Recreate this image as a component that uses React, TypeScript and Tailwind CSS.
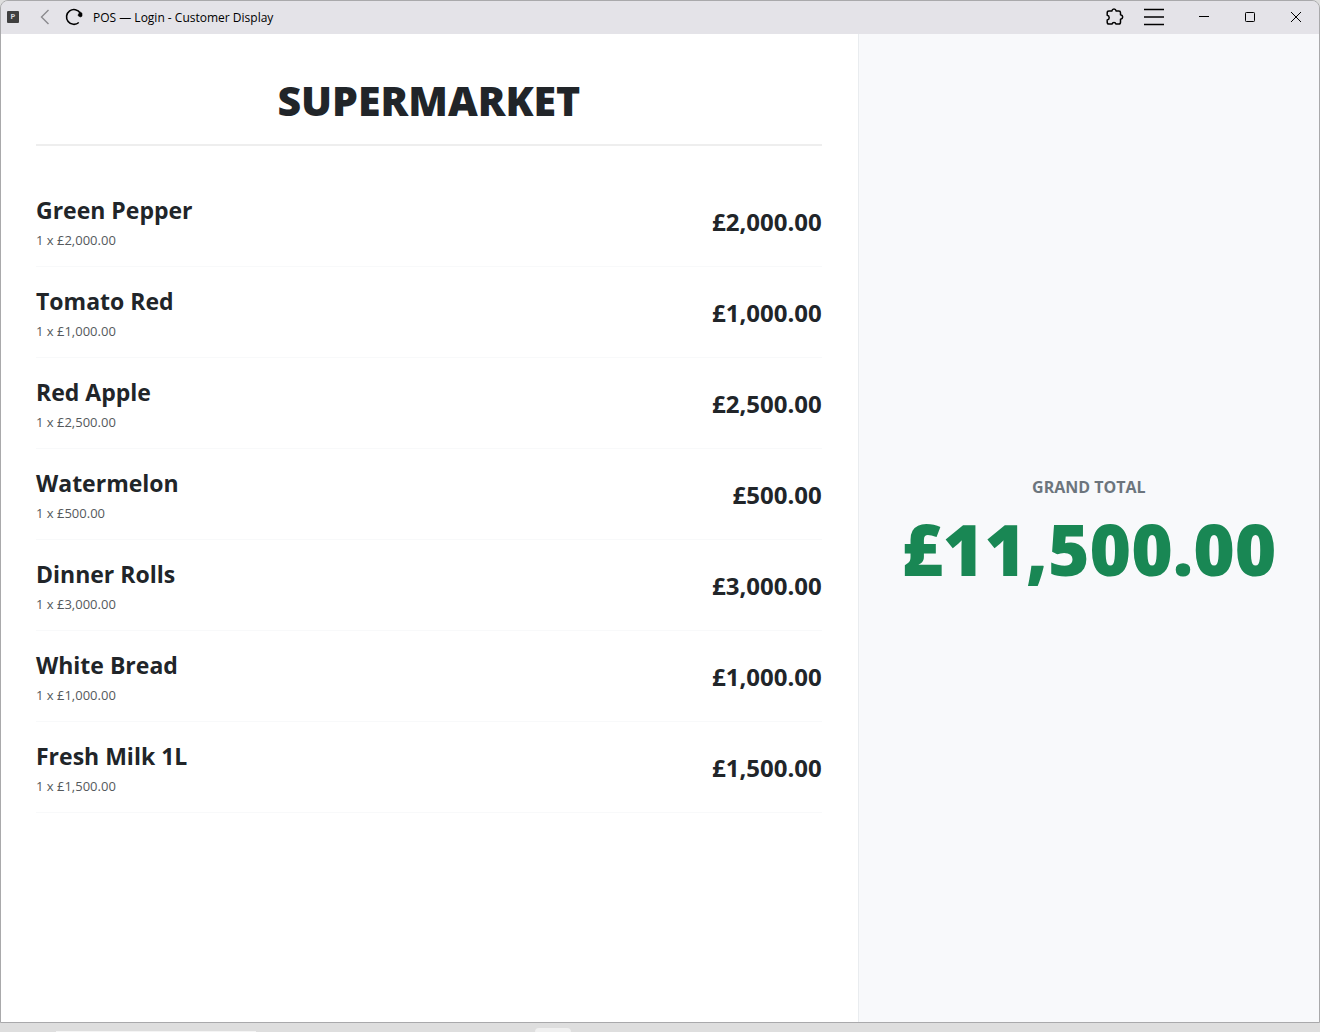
import React from 'react';

interface CartLine {
  name: string;
  qty: number;
  price: number;
}

const cart: CartLine[] = [
  { name: 'Green Pepper', qty: 1, price: 2000 },
  { name: 'Tomato Red', qty: 1, price: 1000 },
  { name: 'Red Apple', qty: 1, price: 2500 },
  { name: 'Watermelon', qty: 1, price: 500 },
  { name: 'Dinner Rolls', qty: 1, price: 3000 },
  { name: 'White Bread', qty: 1, price: 1000 },
  { name: 'Fresh Milk 1L', qty: 1, price: 1500 },
];

const formatMoney = (value: number) =>
  `£${value.toLocaleString('en-GB', { minimumFractionDigits: 2, maximumFractionDigits: 2 })}`;

function TitleBar() {
  return (
    <header className="flex h-[33px] shrink-0 items-center bg-[#e4e3e8] pb-px text-black">
      <div className="ml-1.5 flex size-3 items-center justify-center rounded-[1px] bg-[#404040] font-mono text-[8px] font-bold leading-none text-gray-300">
        P
      </div>
      <button type="button" aria-label="Back" className="ml-5 text-[#8b8a8e]">
        <svg width="12" height="18" viewBox="0 0 12 18" fill="none" stroke="currentColor" strokeWidth="1.4">
          <path d="M9.500 2 2.500 9l7 7" />
        </svg>
      </button>
      <button type="button" aria-label="Reload" className="ml-3.5">
        <svg width="18" height="18" viewBox="0 0 18 18" fill="none" stroke="currentColor" strokeWidth="1.6">
          <path d="M13.800 14.500A7.400 7.400 0 1 1 15.200 5" />
          <path d="M15.400 4.200 17 5.200v3l-1.800.8-2.200-1.400.6-1.800z" fill="currentColor" strokeWidth="0.600" strokeLinejoin="round" />
        </svg>
      </button>
      <span className="ml-2.5 pt-px text-xs">POS — Login - Customer Display</span>

      <div className="ml-auto flex items-center">
        <button type="button" aria-label="Extensions" className="mr-5">
          <svg width="18" height="18" viewBox="0 0 18 18" fill="none" stroke="currentColor" strokeWidth="1.5" strokeLinejoin="round">
            <path d="M3 3h2.800C6.100 1.700 6.900 1 8 1s1.900.7 2.200 2h2.600q1.700 0 1.700 1.700v2.100c1.300.3 2.200 1.100 2.200 2.200s-.9 1.900-2.200 2.200v3q0 1.800-1.700 1.800H10c-.3-1-1-1.500-2-1.500s-1.700.5-2 1.500H3q-1.800 0-1.800-1.800v-2.300c1.300-.3 2-1.100 2-2.200S2.500 7.500 1.200 7.200V4.700Q1.200 3 3 3z" />
          </svg>
        </button>
        <button type="button" aria-label="Menu" className="mr-[17px]">
          <svg width="20" height="18" viewBox="0 0 20 18" stroke="currentColor" strokeWidth="1.7">
            <path d="M0 1.500h20M0 9h20M0 16.500h20" />
          </svg>
        </button>
        <button type="button" aria-label="Minimize" className="flex w-[46px] justify-center">
          <svg width="10" height="10" viewBox="0 0 10 10" stroke="currentColor">
            <path d="M0 4.500h10" />
          </svg>
        </button>
        <button type="button" aria-label="Maximize" className="flex w-[46px] justify-center">
          <svg width="10" height="10" viewBox="0 0 10 10" fill="none" stroke="currentColor">
            <rect x="0.500" y="0.500" width="9" height="9" rx="0.800" />
          </svg>
        </button>
        <button type="button" aria-label="Close" className="flex w-[46px] justify-center">
          <svg width="10" height="10" viewBox="0 0 10 10" stroke="currentColor">
            <path d="m0 0 10 10M10 0 0 10" />
          </svg>
        </button>
      </div>
    </header>
  );
}

function CartRow({ line }: { line: CartLine }) {
  return (
    <li className="flex items-center justify-between border-b border-[#f8f9fa] pt-4 pb-3.5">
      <div>
        <div className="text-[23px] leading-9 font-bold">{line.name}</div>
        <div className="text-[13px] leading-6 text-[#55595c]">
          {line.qty} x {formatMoney(line.price)}
        </div>
      </div>
      <div className="text-2xl leading-9 font-bold">{formatMoney(line.price * line.qty)}</div>
    </li>
  );
}

export default function App() {
  const total = cart.reduce((sum, line) => sum + line.qty * line.price, 0);

  return (
    <div className="flex min-h-screen flex-col bg-[#dedede] font-['Open_Sans','Noto_Sans',sans-serif]">
      <div className="flex flex-1 flex-col overflow-hidden rounded-t-lg border border-[#a9a9ab]">
        <TitleBar />
        <div className="flex flex-1 text-[#212529]">
          <main className="w-[65%] bg-white pt-9 pr-9 pl-[35px]">
            <h1 className="border-b-2 border-[#eeeeee] pb-3.5 text-center text-[41px] leading-[60px] font-extrabold">
              SUPERMARKET
            </h1>
            <ul className="pt-[30px]">
              {cart.map((line) => (
                <CartRow key={line.name} line={line} />
              ))}
            </ul>
          </main>
          <aside className="flex w-[35%] flex-col items-center justify-center border-l border-[#e9ecef] bg-[#f8f9fb] pt-[18px]">
            <h2 className="text-base leading-6 font-bold text-[#6c757d]">GRAND TOTAL</h2>
            <div className="text-[71px] leading-[100px] font-extrabold text-[#198754]">{formatMoney(total)}</div>
          </aside>
        </div>
      </div>
      <footer className="flex h-[9px] shrink-0 items-end overflow-hidden">
        <div className="ml-14 h-px w-50 bg-[#f4f4f4]" />
        <div className="ml-[279px] h-1 w-9 rounded-t-sm bg-[#f0f0f0]" />
      </footer>
    </div>
  );
}
